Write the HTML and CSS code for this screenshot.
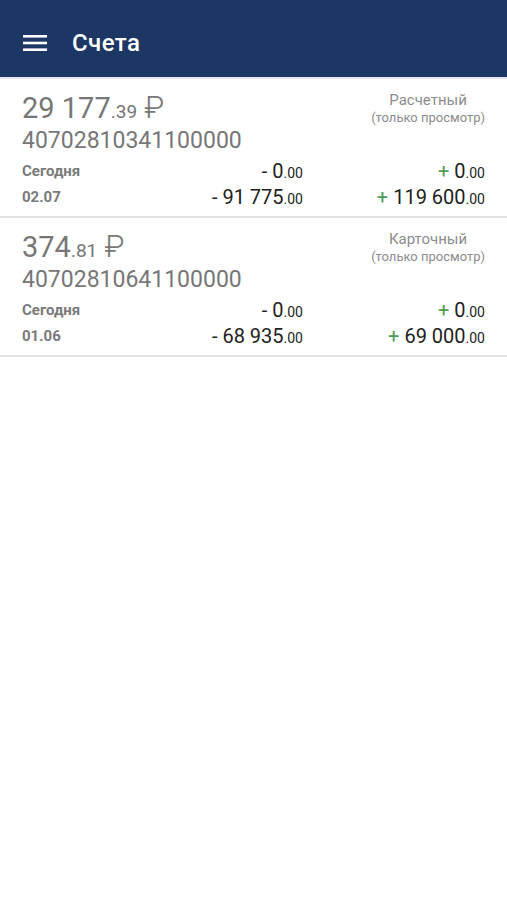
FILE: index.html
```html
<!DOCTYPE html>
<html lang="ru">
<head>
    <meta charset="UTF-8">
    <meta name="viewport" content="width=device-width, initial-scale=1.0">
    <title>Счета</title>
    <link rel="stylesheet" href="styles.css">
</head>
<body>
    <header class="toolbar">
        <svg class="menu-icon" width="24" height="16" viewBox="0 0 24 16">
            <rect x="0" y="0" width="24" height="2.6" fill="#fff"/>
            <rect x="0" y="6.7" width="24" height="2.6" fill="#fff"/>
            <rect x="0" y="13.4" width="24" height="2.6" fill="#fff"/>
        </svg>
        <h1 class="title">Счета</h1>
    </header>

    <main class="accounts">
        <div class="account">
            <div class="account-top">
                <div class="account-main">
                    <div class="balance">29 177<span class="cents">.39</span> <span class="rub">₽</span></div>
                    <div class="number">40702810341100000</div>
                </div>
                <div class="account-type">
                    <div class="type-name">Расчетный</div>
                    <div class="type-note">(только просмотр)</div>
                </div>
            </div>
            <div class="turnover">
                <div class="day">Сегодня</div>
                <div class="amount">- 0<span class="cents">.00</span></div>
                <div class="amount"><span class="plus">+</span> 0<span class="cents">.00</span></div>
                <div class="day">02.07</div>
                <div class="amount">- 91 775<span class="cents">.00</span></div>
                <div class="amount"><span class="plus">+</span> 119 600<span class="cents">.00</span></div>
            </div>
        </div>

        <div class="account">
            <div class="account-top">
                <div class="account-main">
                    <div class="balance">374<span class="cents">.81</span> <span class="rub">₽</span></div>
                    <div class="number">40702810641100000</div>
                </div>
                <div class="account-type">
                    <div class="type-name">Карточный</div>
                    <div class="type-note">(только просмотр)</div>
                </div>
            </div>
            <div class="turnover">
                <div class="day">Сегодня</div>
                <div class="amount">- 0<span class="cents">.00</span></div>
                <div class="amount"><span class="plus">+</span> 0<span class="cents">.00</span></div>
                <div class="day">01.06</div>
                <div class="amount">- 68 935<span class="cents">.00</span></div>
                <div class="amount"><span class="plus">+</span> 69 000<span class="cents">.00</span></div>
            </div>
        </div>
    </main>
</body>
</html>
```

FILE: styles.css
```css
/* Base */
* {
    margin: 0;
    padding: 0;
    box-sizing: border-box;
}

body {
    font-family: Roboto, "Noto Sans", Arial, sans-serif;
    background: #fff;
    color: #222;
}

/* Toolbar */
.toolbar {
    height: 79px;
    background: #1c3763;
    display: flex;
    align-items: center;
    padding: 8px 0 0 23px;
    border-bottom: 2px solid #e4e6ea;
}

.menu-icon {
    display: block;
    margin-right: 25px;
}

.title {
    color: #fff;
    font-size: 24px;
    font-weight: 500;
    letter-spacing: 0.4px;
}

/* Account cards */
.account {
    padding: 10px 22px 6px 22px;
    border-bottom: 2px solid #e2e2e2;
}

.account-top {
    display: flex;
    justify-content: space-between;
}

.balance {
    font-size: 29px;
    color: #777;
    line-height: 38px;
}

.balance .cents {
    font-size: 19px;
    line-height: 1;
}

.balance .rub {
    font-size: 31px;
    font-weight: 300;
    line-height: 1;
}

.number {
    font-size: 23px;
    color: #777;
    line-height: 28px;
}

.account-type {
    text-align: center;
    color: #8c8c8c;
    padding-top: 2px;
}

.type-name {
    font-size: 15px;
    line-height: 18px;
}

.type-note {
    font-size: 13px;
    line-height: 18px;
}

/* Turnover rows */
.turnover {
    display: grid;
    grid-template-columns: 1fr 130px 182px;
    align-items: center;
    margin-top: 3px;
}

.day {
    font-size: 15px;
    font-weight: 700;
    color: #7a7a7a;
    line-height: 26px;
}

.amount {
    font-size: 20px;
    text-align: right;
    color: #222;
    line-height: 26px;
}

.amount .cents {
    font-size: 14px;
    line-height: 1;
}

.plus {
    color: #4f9d55;
}
```
